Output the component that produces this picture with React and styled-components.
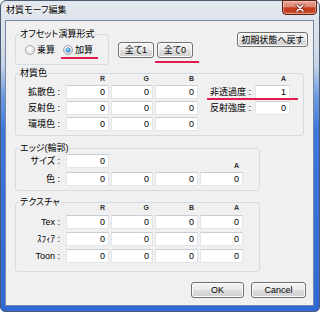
import React from "react";
import styled, { createGlobalStyle } from "styled-components";

const GlobalStyle = createGlobalStyle`
  html, body { margin: 0; padding: 0; background: #ffffff; }
  body {
    font-family: "Liberation Sans", "Noto Sans CJK JP", sans-serif;
    font-size: 9px;
    color: #000;
  }
  * { box-sizing: border-box; }
`;

const Window = styled.div`
  width: 320px;
  height: 312px;
  border: 1px solid #4b5b72;
  border-radius: 6px 6px 5px 5px;
  background: linear-gradient(180deg, #e3e8ee 0px, #d9e0e9 40px, #c5d3e6 65px, #6e9be0 95px, #3c78dc 130px, #2e69d6 312px);
  padding: 0 5px 5px 4px;
  display: flex;
  flex-direction: column;
  font-feature-settings: "palt";
`;

const TitleBar = styled.div`
  height: 19px;
  display: flex;
  justify-content: space-between;
  align-items: flex-start;
  flex: none;
`;

const Title = styled.div`
  padding: 4px 0 0 1px;
  font-size: 9px;
  line-height: 11px;
  color: #000;
  text-shadow: 0 0 4px #fff, 0 0 2px #fff;
`;

const CloseButton = styled.div`
  width: 35px;
  height: 15px;
  margin: -1px -3px 0 0;
  border: 1px solid #5a2419;
  border-radius: 0 0 4px 4px;
  background: linear-gradient(180deg, #eaa89a 0%, #da8570 45%, #c7401f 52%, #c03a1f 75%, #d8623a 100%);
  box-shadow: inset 0 0 0 1px rgba(255, 220, 210, 0.45);
  display: flex;
  align-items: center;
  justify-content: center;
`;

const Client = styled.div`
  flex: 1;
  background: #f0f0f0;
  border: 1px solid #7487a3;
  display: flex;
  flex-direction: column;
`;

const TopRow = styled.div`
  display: flex;
  align-items: flex-start;
  padding: 8px 5px 0 9px;
`;

const Group = styled.fieldset`
  margin: ${(p) => p.$mt || 0}px 0 0 ${(p) => p.$ml || 0}px;
  width: ${(p) => p.$w}px;
  height: ${(p) => p.$h}px;
  padding: 0;
  border: 1px solid #d3dce3;
  border-radius: 3px;
  min-width: 0;
  flex: none;
`;

const Legend = styled.legend`
  margin-left: 3px;
  padding: 0 1px;
  font-size: 9px;
  line-height: 11px;
  color: #000;
`;

const RadioRow = styled.div`
  display: flex;
  align-items: center;
  padding: 5px 0 0 9px;
`;

const Radio = styled.label`
  position: relative;
  display: flex;
  align-items: center;
  gap: 2px;
  margin-right: 8px;
  font-size: 9px;
  line-height: 10px;

  &::after {
    content: "";
    display: ${(p) => (p.$marked ? "block" : "none")};
    position: absolute;
    left: -2px;
    right: -5px;
    bottom: -4px;
    height: 2px;
    background: #e31a4f;
  }
`;

const RadioDot = styled.span`
  position: relative;
  width: 10px;
  height: 10px;
  border-radius: 50%;
  border: 1px solid #a3a7ad;
  background: radial-gradient(circle at 40% 35%, #ffffff 0%, #f1f1f1 40%, #d4d4d4 100%);
  flex: none;

  &::after {
    content: "";
    display: ${(p) => (p.$checked ? "block" : "none")};
    position: absolute;
    left: 2px;
    top: 2px;
    width: 4px;
    height: 4px;
    border-radius: 50%;
    background: radial-gradient(circle at 40% 35%, #a6e4ff 0%, #3199e8 55%, #0f5fb5 100%);
    box-shadow: 0 0 0 0.5px #1d62b0;
  }
`;

const Button = styled.div`
  position: relative;
  width: ${(p) => p.$w}px;
  height: ${(p) => p.$h || 16}px;
  margin-top: ${(p) => p.$mt || 0}px;
  margin-left: ${(p) => (p.$ml === "auto" ? "auto" : `${p.$ml || 0}px`)};
  border: 1px solid #707070;
  border-radius: 3px;
  background: linear-gradient(180deg, #f4f4f4 0%, #ebebeb 48%, #dddddd 52%, #d0d0d0 100%);
  box-shadow: inset 0 0 0 1px #fbfbfb;
  display: flex;
  align-items: center;
  justify-content: center;
  font-size: 9px;
  line-height: 10px;
  color: #000;
  flex: none;

  &::after {
    content: "";
    display: ${(p) => (p.$marked ? "block" : "none")};
    position: absolute;
    left: -3px;
    right: -7px;
    bottom: -6px;
    height: 2px;
    background: #e31a4f;
  }
`;

const Grid = styled.div`
  display: grid;
  grid-template-columns: ${(p) => p.$cols};
  grid-template-rows: ${(p) => p.$rows};
  column-gap: 2px;
  row-gap: ${(p) => p.$rg}px;
  margin-top: ${(p) => p.$mt || 0}px;
`;

const Head = styled.div`
  grid-column: ${(p) => p.$col};
  align-self: end;
  text-align: right;
  padding-right: 4px;
  font-size: 7px;
  font-weight: bold;
  line-height: 8px;
  color: #333;
  margin-bottom: ${(p) => p.$mb || 0}px;
`;

const Label = styled.div`
  position: relative;
  grid-column: ${(p) => p.$col || 1};
  text-align: right;
  padding-right: ${(p) => p.$pr ?? 4}px;
  font-size: 9px;
  line-height: 14px;
  white-space: nowrap;

  &::after {
    content: "";
    display: ${(p) => (p.$marked ? "block" : "none")};
    position: absolute;
    left: 7px;
    width: 91px;
    bottom: -1px;
    height: 2px;
    background: #e31a4f;
    z-index: 2;
  }
`;

const Field = styled.div`
  grid-column: ${(p) => p.$col};
  height: 14px;
  background: #fff;
  border: 1px solid #e2e5e9;
  border-top-color: #c9ced4;
  text-align: right;
  padding-right: 3px;
  font-size: 9px;
  line-height: 12px;
  color: #000;
`;

const BottomRow = styled.div`
  display: flex;
  justify-content: flex-end;
  gap: 7px;
  margin-top: 10px;
  padding-right: 7px;
`;

const X = () => (
  <svg width="10" height="8" viewBox="0 0 10 8">
    <path d="M2 1 L8 7 M8 1 L2 7" stroke="#6b2316" strokeWidth="3" strokeLinecap="round" />
    <path d="M2 1 L8 7 M8 1 L2 7" stroke="#ffffff" strokeWidth="1.6" strokeLinecap="round" />
  </svg>
);

const COLS6 = "48px 43px 42px 43px 53px 35px";
const COLS5 = "48px 43px 42px 43px 43px";

export default function App() {
  return (
    <>
      <GlobalStyle />
      <Window>
        <TitleBar>
          <Title>材質モーフ編集</Title>
          <CloseButton>
            <X />
          </CloseButton>
        </TitleBar>
        <Client>
          <TopRow>
            <Group $w={94} $h={36}>
              <Legend>オフセット演算形式</Legend>
              <RadioRow>
                <Radio>
                  <RadioDot />
                  乗算
                </Radio>
                <Radio $marked>
                  <RadioDot $checked />
                  加算
                </Radio>
              </RadioRow>
            </Group>
            <Button $w={36} $mt={13} $ml={9}>全て1</Button>
            <Button $w={36} $mt={13} $ml={3} $marked>全て0</Button>
            <Button $w={71} $h={15} $mt={3} $ml="auto">初期状態へ戻す</Button>
          </TopRow>

          <Group $w={289} $h={68} $mt={3} $ml={9}>
            <Legend>材質色</Legend>
            <Grid $cols={COLS6} $rows="9px 14px 14px 14px" $rg={2} $mt={-5}>
              <Head $col={2}>R</Head>
              <Head $col={3}>G</Head>
              <Head $col={4}>B</Head>
              <Head $col={6}>A</Head>

              <Label>拡散色 :</Label>
              <Field $col={2}>0</Field>
              <Field $col={3}>0</Field>
              <Field $col={4}>0</Field>
              <Label $col={5} $pr={2} $marked>非透過度 :</Label>
              <Field $col={6}>1</Field>

              <Label>反射色 :</Label>
              <Field $col={2}>0</Field>
              <Field $col={3}>0</Field>
              <Field $col={4}>0</Field>
              <Label $col={5} $pr={2}>反射強度 :</Label>
              <Field $col={6}>0</Field>

              <Label>環境色 :</Label>
              <Field $col={2}>0</Field>
              <Field $col={3}>0</Field>
              <Field $col={4}>0</Field>
            </Grid>
          </Group>

          <Group $w={245} $h={48} $mt={7} $ml={9}>
            <Legend>エッジ(輪郭)</Legend>
            <Grid $cols={COLS5} $rows="14px 14px" $rg={4}>
              <Label>サイズ :</Label>
              <Field $col={2}>0</Field>
              <Head $col={5} $mb={-2}>A</Head>

              <Label>色 :</Label>
              <Field $col={2}>0</Field>
              <Field $col={3}>0</Field>
              <Field $col={4}>0</Field>
              <Field $col={5}>0</Field>
            </Grid>
          </Group>

          <Group $w={245} $h={75} $mt={6} $ml={9}>
            <Legend>テクスチャ</Legend>
            <Grid $cols={COLS5} $rows="8px 14px 14px 14px" $rg={3} $mt={-4}>
              <Head $col={2}>R</Head>
              <Head $col={3}>G</Head>
              <Head $col={4}>B</Head>
              <Head $col={5}>A</Head>

              <Label>Tex :</Label>
              <Field $col={2}>0</Field>
              <Field $col={3}>0</Field>
              <Field $col={4}>0</Field>
              <Field $col={5}>0</Field>

              <Label>ｽﾌｨｱ :</Label>
              <Field $col={2}>0</Field>
              <Field $col={3}>0</Field>
              <Field $col={4}>0</Field>
              <Field $col={5}>0</Field>

              <Label>Toon :</Label>
              <Field $col={2}>0</Field>
              <Field $col={3}>0</Field>
              <Field $col={4}>0</Field>
              <Field $col={5}>0</Field>
            </Grid>
          </Group>

          <BottomRow>
            <Button $w={53}>OK</Button>
            <Button $w={55}>Cancel</Button>
          </BottomRow>
        </Client>
      </Window>
    </>
  );
}
